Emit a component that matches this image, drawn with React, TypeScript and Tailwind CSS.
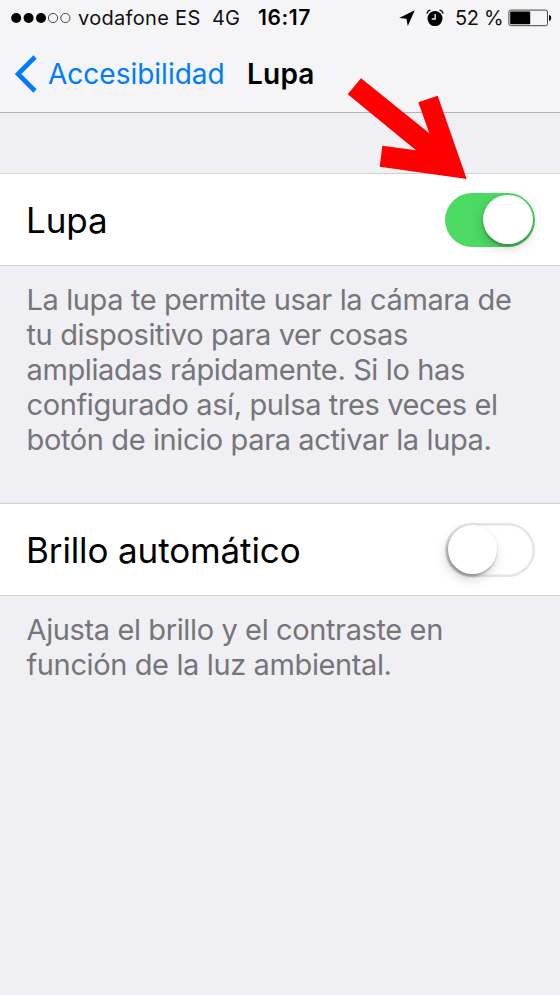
import clsx from "clsx";

function StatusBar() {
  return (
    <div className="flex h-9 items-center text-[20px] leading-9 text-[#111]">
      <svg viewBox="0 0 60 12" className="ml-[11px] h-3 w-[60px] shrink-0">
        <circle cx="5.2" cy="6" r="5" fill="#000" />
        <circle cx="17.6" cy="6" r="5" fill="#000" />
        <circle cx="30" cy="6" r="5" fill="#000" />
        <circle cx="42" cy="6" r="4.6" fill="none" stroke="#333" strokeWidth="0.9" />
        <circle cx="54.4" cy="6" r="4.6" fill="none" stroke="#333" strokeWidth="0.9" />
      </svg>
      <span className="ml-[7px] w-[134px] shrink-0 tracking-[0.32px]">vodafone ES</span>
      <span className="w-[46px] shrink-0">4G</span>
      <span className="text-[21px] font-semibold tracking-[0.6px] text-black">16:17</span>
      <svg viewBox="0 0 16 16" className="mr-[11px] ml-auto size-4 shrink-0">
        <path d="M15.8 0.3 8.8 16 7.4 8.7 0.1 8Z" fill="#000" />
      </svg>
      <svg viewBox="0 0 18 18" className="mr-[11px] size-[18px] shrink-0">
        <circle cx="9" cy="9.6" r="7.5" fill="#000" />
        <path d="M9.2 5v5H5.8" fill="none" stroke="#f5f5f7" strokeWidth="1.3" />
        <path d="M1 4.6A4 4 0 0 1 4.5 1.2M17 4.6A4 4 0 0 0 13.5 1.2" fill="none" stroke="#000" strokeWidth="1.3" />
      </svg>
      <span className="w-[53px] shrink-0 tracking-[-0.3px] whitespace-nowrap">52 %</span>
      <svg viewBox="0 0 44 18" className="mr-2 h-[18px] w-11 shrink-0">
        <rect x="0.9" y="1.1" width="38.6" height="15.6" rx="2" fill="none" stroke="#444" />
        <rect x="2.2" y="2.5" width="20" height="12.8" rx="0.8" fill="#000" />
        <path d="M41 6c1.6.4 2.2 1.5 2.2 3s-.6 2.6-2.2 3Z" fill="#000" />
      </svg>
    </div>
  );
}

function NavBar() {
  return (
    <div className="flex h-[76px] items-center text-[28px] leading-[76px]">
      <svg viewBox="0 0 24 38" className="ml-[14px] h-[38px] w-6 shrink-0">
        <path d="M21 2 4 19l17 17" fill="none" stroke="#007aff" strokeWidth="4.6" />
      </svg>
      <span className="ml-[10px] w-[199px] shrink-0 text-[#007aff]">Accesibilidad</span>
      <span className="font-semibold tracking-[0.2px] text-black">Lupa</span>
    </div>
  );
}

function Toggle({ on }: { on: boolean }) {
  return (
    <div
      className={clsx(
        "flex h-[54px] w-[90px] items-center rounded-full",
        on ? "justify-end bg-[#4cd964] pr-[2.5px]" : "bg-white pl-[2.5px] shadow-[inset_0_0_0_2.5px_#e5e5e5]"
      )}
    >
      <div
        className={clsx(
          "size-[49.5px] rounded-full bg-white",
          on
            ? "shadow-[0_2px_3px_rgba(0,0,0,0.3),-1px_5px_12px_rgba(0,0,0,0.15)]"
            : "shadow-[-1px_2px_3px_rgba(0,0,0,0.35),-2px_5px_12px_rgba(0,0,0,0.17)]"
        )}
      />
    </div>
  );
}

function Row({ label, on }: { label: string; on: boolean }) {
  return (
    <div className="flex h-[93px] items-center justify-between border-y border-[#d0d0d5] bg-white pr-[25px] pl-[26px]">
      <span className="pt-0.5 text-[35px] leading-none tracking-[-0.12px] text-black">{label}</span>
      <Toggle on={on} />
    </div>
  );
}

function Note({ lines }: { lines: string[] }) {
  return (
    <div className="pl-[26.5px] text-[29px] leading-[35px] tracking-[-0.38px] whitespace-nowrap text-[#75757a]">
      {lines.map((line) => (
        <p key={line}>{line}</p>
      ))}
    </div>
  );
}

export default function App() {
  return (
    <div className="relative h-[995px] w-[560px] overflow-hidden bg-[#efeff4] font-['Inter',sans-serif]">
      <header className="h-[113px] border-b border-[#b2b2b6] bg-[#f5f5f7]">
        <StatusBar />
        <NavBar />
      </header>

      <main className="pt-[60px]">
        <Row label="Lupa" on={true} />
        <div className="h-[237px] pt-4">
          <Note
            lines={[
              "La lupa te permite usar la cámara de",
              "tu dispositivo para ver cosas",
              "ampliadas rápidamente. Si lo has",
              "configurado así, pulsa tres veces el",
              "botón de inicio para activar la lupa.",
            ]}
          />
        </div>
        <Row label="Brillo automático" on={false} />
        <div className="pt-4">
          <Note lines={["Ajusta el brillo y el contraste en", "función de la luz ambiental."]} />
        </div>
      </main>

      <svg viewBox="0 0 560 200" className="pointer-events-none absolute top-0 left-0 h-[200px] w-[560px]">
        <path
          d="M361 78.3 429.3 133.3 418.3 102.3 437.7 95.7 466.7 179 379.7 166.7 382.3 145.7 416 150.3 347.7 94.3Z"
          fill="#f00"
        />
      </svg>
    </div>
  );
}
